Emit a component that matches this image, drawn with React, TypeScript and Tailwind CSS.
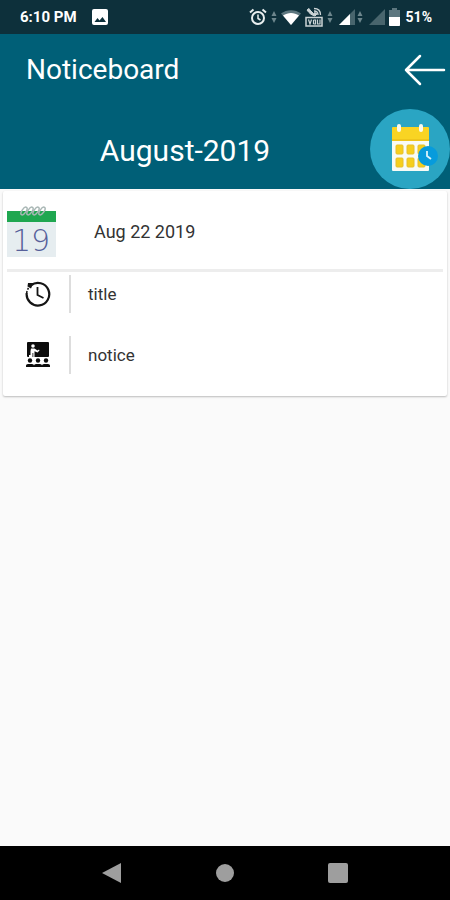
// App.tsx

type IconProps = {
  className?: string;
};

type NoticeRowProps = {
  icon: React.ReactNode;
  text: string;
};

const AlarmIcon = () => (
  <svg viewBox="0 0 18 18" className="w-[18px] h-[18px]" fill="none" stroke="#e8eeef">
    <circle cx="9" cy="10" r="6" strokeWidth="2" />
    <path d="M1 4.5 4.5 1.5M17 4.5 13.5 1.5" strokeWidth="2" />
    <path d="M9 6.5V10.5L11.5 12" strokeWidth="1.5" />
  </svg>
);

const DataArrowsIcon = ({ className }: IconProps) => (
  <svg viewBox="0 0 6 14" className={`w-[6px] h-[14px] ${className ?? ""}`} fill="#6d868d">
    <path d="M3 1 5.500 6H.5zM3 13 .5 8h5z" />
  </svg>
);

const WifiIcon = () => (
  <svg viewBox="0 0 20 16" className="w-5 h-4">
    <path d="M0 4.5C5.500 0 14.500 0 20 4.500L10 16z" fill="#5d777f" />
    <path d="M2 6.500C7 3 13 3 18 6.500L10 16z" fill="#fff" />
  </svg>
);

const CallWifiIcon = () => (
  <svg viewBox="0 0 18 20" className="w-[18px] h-5" fill="none" stroke="#cbd4d6">
    <path d="M2 3C4 6 6 8 10 9L12 7 10 5.500 8.500 6.500 5 3 4 1.500z" fill="#cbd4d6" />
    <path d="M9 1.500C13 1.500 15.500 4 15.500 8M9 4C11.500 4 13 5.500 13 8" strokeWidth="1.300" />
    <path d="M1 10.500H17V19H1z" strokeWidth="1.500" />
    <path d="M3.500 12.500 5 17 6.500 12.500M8.500 13V17M8.500 13H10.500V17H8.500M12.500 12.500V17H15V12.500" strokeWidth="1.200" />
  </svg>
);

const SignalIcon = ({ filled }: { filled?: boolean }) => (
  <svg viewBox="0 0 16 16" className="w-4 h-4">
    <path d="M16 0V16H0z" fill="#48656d" />
    {filled && <path d="M11 5V16H0z" fill="#fff" />}
  </svg>
);

const BatteryIcon = () => (
  <svg viewBox="0 0 11 18" className="w-[11px] h-[18px]">
    <path d="M3 0H8V2H11V18H0V2H3z" fill="#5d777f" />
    <path d="M0 9H11V17Q11 18 10 18H1Q0 18 0 17z" fill="#fff" />
  </svg>
);

const PictureIcon = () => (
  <svg viewBox="0 0 16 16" className="w-4 h-4">
    <rect width="16" height="16" rx="2" fill="#fff" />
    <path d="M2.500 13 5.500 9 7.500 11.500 10.500 8 14 13z" fill="#0d303b" />
  </svg>
);

const BackArrowIcon = () => (
  <svg
    viewBox="0 0 42 32"
    className="w-[42px] h-8"
    fill="none"
    stroke="#fff"
    strokeWidth="2.500"
    strokeLinecap="round"
    strokeLinejoin="round"
  >
    <path d="M40 16H2M16 2 2 16 16 30" />
  </svg>
);

const CalendarClockIcon = () => (
  <svg viewBox="0 0 80 80" className="w-20 h-20">
    <circle cx="40" cy="40" r="40" fill="#2aa5c3" />
    <rect x="22" y="19" width="37" height="43" rx="1" fill="#f8fbf5" />
    <path d="M22 19Q22 18 23 18H58Q59 18 59 19V32H22z" fill="#f9d423" />
    <path d="M22 30H59V32H22z" fill="#efc51c" />
    <g fill="#f9f9ee">
      <rect x="27" y="15" width="4" height="8" rx="2" />
      <rect x="49" y="15" width="4" height="8" rx="2" />
    </g>
    <g fill="#f6cf1c" stroke="#e6c02a" strokeWidth="1">
      <rect x="26" y="36" width="7" height="9" rx="1" />
      <rect x="37" y="36" width="7" height="9" rx="1" />
      <rect x="48" y="36" width="7" height="9" rx="1" />
      <rect x="26" y="49" width="7" height="9" rx="1" />
      <rect x="37" y="49" width="7" height="9" rx="1" />
      <rect x="48" y="49" width="7" height="9" rx="1" />
    </g>
    <circle cx="58" cy="47" r="10" fill="#079bdc" />
    <path d="M57 42V47L61 50" fill="none" stroke="#d9f3fb" strokeWidth="1.800" />
  </svg>
);

const DateIcon = () => (
  <svg viewBox="0 0 50 52" className="w-[50px] h-[52px] overflow-visible" fill="none">
    <path d="M0 5H49V51H0z" fill="#e6edf0" />
    <path d="M0 5H49V16H0z" fill="#1fa750" />
    <g stroke="#a9b7b5" strokeWidth="1.500">
      <ellipse cx="17" cy="5" rx="2" ry="4.500" transform="rotate(35 17 5)" />
      <ellipse cx="23" cy="5" rx="2" ry="4.500" transform="rotate(35 23 5)" />
      <ellipse cx="29" cy="5" rx="2" ry="4.500" transform="rotate(35 29 5)" />
      <ellipse cx="35" cy="5" rx="2" ry="4.500" transform="rotate(35 35 5)" />
    </g>
    <text
      x="24"
      y="45"
      textAnchor="middle"
      fontSize="30"
      fontWeight="200"
      fill="#56609a"
      fontFamily="'DejaVu Sans', sans-serif"
    >
      19
    </text>
  </svg>
);

const HistoryIcon = () => (
  <svg viewBox="0 0 26 26" className="w-[26px] h-[26px]" fill="none" stroke="#151515">
    <path d="M6 4.300A11.300 11.300 0 1 1 1.700 12" strokeWidth="2.200" />
    <path d="M1.700 12A11 11 0 0 1 3.500 7" strokeWidth="1.500" strokeDasharray="2 1.500" />
    <path d="M3 2 8.500 2 6 7.500 2.500 5.500z" fill="#151515" stroke="none" />
    <path d="M12.500 6V14L18.500 17" strokeWidth="1.800" />
  </svg>
);

const ClassIcon = () => (
  <svg viewBox="0 0 24 26" className="w-6 h-[26px]" fill="#0c0c0c">
    <rect x="1" y="0" width="22" height="15" rx="1" />
    <g fill="#fff">
      <circle cx="7" cy="4" r="1.800" />
      <path d="M5 6.500H8.500L11.500 8.500 13 7.500 13.500 8.500 11.500 10.500 8.500 9.200V15H7.300V11H6.500V15H3V13H4.500V9z" />
    </g>
    <circle cx="4" cy="18.500" r="2.200" />
    <circle cx="12" cy="18.500" r="2.200" />
    <circle cx="20" cy="18.500" r="2.200" />
    <path d="M0 25V23.500Q0 22 2 22H6Q8 22 8 23.500Q8 22 10 22H14Q16 22 16 23.500Q16 22 18 22H22Q24 22 24 23.500V25z" />
  </svg>
);

const StatusBar = () => (
  <div className="h-[34px] flex items-center bg-[#0d303b] pl-5 pr-[18px] text-white font-bold">
    <span className="text-[15px] leading-4">6:10 PM</span>
    <div className="ml-[15px]">
      <PictureIcon />
    </div>
    <div className="ml-auto flex items-center">
      <AlarmIcon />
      <DataArrowsIcon className="ml-1" />
      <div className="ml-1 flex items-center gap-1">
        <WifiIcon />
        <CallWifiIcon />
      </div>
      <DataArrowsIcon className="ml-1 mr-1.5" />
      <SignalIcon filled />
      <DataArrowsIcon className="ml-0.5 mr-1.5" />
      <div className="flex items-center gap-1">
        <SignalIcon />
        <BatteryIcon />
      </div>
      <span className="ml-1.5 text-sm leading-4">51%</span>
    </div>
  </div>
);

const Header = () => (
  <header className="bg-[#005f77] text-white">
    <div className="h-[75px] flex items-center justify-between pl-[26px] pr-1 pb-1">
      <h1 className="text-[28px] leading-8">Noticeboard</h1>
      <button type="button" aria-label="Back" className="cursor-pointer">
        <BackArrowIcon />
      </button>
    </div>
    <div className="flex items-center">
      <h2 className="flex-1 pt-1 text-center text-[30px] leading-9">August-2019</h2>
      <button type="button" aria-label="Choose month" className="cursor-pointer">
        <CalendarClockIcon />
      </button>
    </div>
  </header>
);

const NoticeRow = ({ icon, text }: NoticeRowProps) => (
  <li className="flex items-center">
    <div className="w-[62px] flex justify-center">{icon}</div>
    <div className="w-0.5 h-[38px] bg-[#dddddd]" />
    <p className="ml-[17px] text-[17px] leading-6">{text}</p>
  </li>
);

const NavBar = () => (
  <nav className="h-[54px] flex items-center justify-center bg-black gap-[93px]">
    <button type="button" aria-label="Back">
      <svg viewBox="0 0 20 20" className="w-5 h-5" fill="#9e9e9e">
        <path d="M0 10 19 0V20z" />
      </svg>
    </button>
    <button type="button" aria-label="Home">
      <svg viewBox="0 0 20 20" className="w-5 h-5" fill="#9e9e9e">
        <circle cx="10" cy="10" r="9" />
      </svg>
    </button>
    <button type="button" aria-label="Recent apps">
      <svg viewBox="0 0 20 20" className="w-5 h-5" fill="#9e9e9e">
        <rect width="20" height="20" rx="2" />
      </svg>
    </button>
  </nav>
);

const App = () => {
  return (
    <div className="min-h-screen flex flex-col bg-[#fafafa] font-[Roboto,sans-serif]">
      <StatusBar />
      <Header />

      {/* お知らせカード */}
      <main className="flex-1 px-[3px] pt-0.5">
        <article className="bg-white pb-[22px] px-1 rounded-xs text-[#333333] shadow-[0_1px_2px_#bbbbbb]">
          <div className="h-[81px] pt-1 flex items-center border-b-3 border-[#ededed]">
            <DateIcon />
            <time dateTime="2019-08-22" className="ml-[37px] text-lg">
              Aug 22 2019
            </time>
          </div>
          <ul className="pt-[3px] flex flex-col gap-[23px]">
            <NoticeRow icon={<HistoryIcon />} text="title" />
            <NoticeRow icon={<ClassIcon />} text="notice" />
          </ul>
        </article>
      </main>

      <NavBar />
    </div>
  );
};

export default App;
